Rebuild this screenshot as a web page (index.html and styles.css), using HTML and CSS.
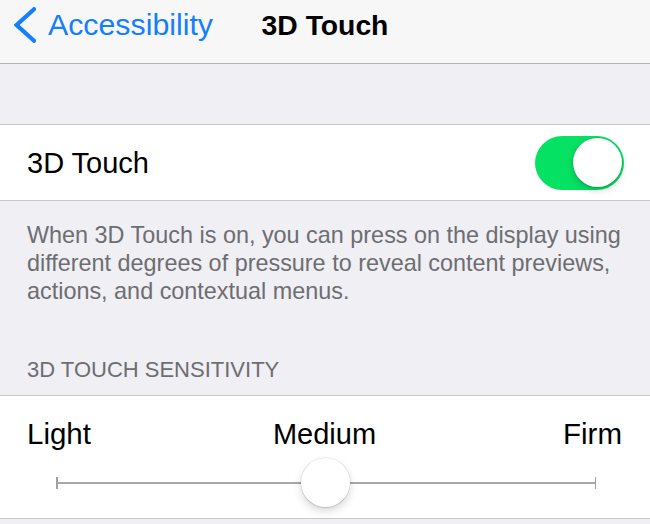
FILE: index.html
```html
<!DOCTYPE html>
<html lang="en">
<head>
<meta charset="utf-8">
<title>3D Touch</title>
<link rel="stylesheet" href="styles.css">
</head>
<body>
<header class="nav">
  <a class="back" href="#">
    <svg class="chevron" width="22" height="36" viewBox="0 0 22 36" aria-hidden="true">
      <polyline points="20,2.2 2.6,18 20,33.8" fill="none" stroke="#157efb" stroke-width="4.2" stroke-linecap="round" stroke-linejoin="miter"/>
    </svg>
    <span class="back-label">Accessibility</span>
  </a>
  <h1 class="title">3D Touch</h1>
  <div class="nav-spacer"></div>
</header>

<div class="gap"></div>

<section class="group">
  <div class="cell">
    <span class="cell-label">3D Touch</span>
    <span class="switch"><span class="knob"></span></span>
  </div>
</section>

<p class="footer">When 3D Touch is on, you can press on the display using different degrees of pressure to reveal content previews, actions, and contextual menus.</p>

<h2 class="section-header">3D TOUCH SENSITIVITY</h2>

<section class="group slider-group">
  <div class="slider-labels">
    <span class="lbl-left">Light</span>
    <span class="lbl-mid">Medium</span>
    <span class="lbl-right">Firm</span>
  </div>
  <div class="slider">
    <span class="tick"></span>
    <span class="track"></span>
    <span class="tick"></span>
    <span class="thumb"></span>
  </div>
</section>
</body>
</html>
```
FILE: styles.css
```css
* { box-sizing: border-box; }

html, body {
  margin: 0;
  padding: 0;
}

body {
  width: 650px;
  height: 524px;
  overflow: hidden;
  background: #efeff4;
  font-family: "Liberation Sans", Arial, sans-serif;
  color: #000;
}

.nav {
  height: 64px;
  background: #f7f7f8;
  border-bottom: 1px solid #b2b2b2;
  display: grid;
  grid-template-columns: 1fr auto 1fr;
  align-items: start;
}

.back {
  display: flex;
  align-items: flex-start;
  padding: 7px 0 0 14px;
  color: #157efb;
  text-decoration: none;
}

.chevron {
  display: block;
  flex: none;
}

.back-label {
  margin: 1px 0 0 12px;
  font-size: 30.3px;
  line-height: 34px;
}

.title {
  margin: 0;
  padding-top: 8px;
  font-size: 28.3px;
  line-height: 34px;
  font-weight: 700;
}

.gap {
  height: 60px;
}

.group {
  background: #fff;
  border-top: 1px solid #c8c7cc;
  border-bottom: 1px solid #c8c7cc;
}

.cell {
  height: 75px;
  display: flex;
  align-items: center;
  justify-content: space-between;
  padding: 0 26px 0 27px;
}

.cell-label {
  font-size: 29px;
  line-height: 34px;
}

.switch {
  width: 89px;
  height: 54px;
  border-radius: 27px;
  background: #05e163;
  display: flex;
  align-items: center;
  justify-content: flex-end;
  padding-right: 2.5px;
}

.knob {
  width: 49px;
  height: 49px;
  border-radius: 50%;
  background: #fff;
  box-shadow: 0 3px 7px rgba(0, 0, 0, 0.18), 0 0 0 0.5px rgba(0, 0, 0, 0.1), 0 1px 1px rgba(0, 0, 0, 0.12);
}

.footer {
  margin: 0;
  padding: 20px 20px 0 27px;
  font-size: 23.4px;
  line-height: 28px;
  color: #6d6d72;
}

.section-header {
  margin: 0;
  padding: 52px 27px 12px;
  font-size: 22px;
  line-height: 26px;
  font-weight: 400;
  color: #6d6d72;
}

.slider-group {
  height: 124px;
  padding-top: 21px;
}

.slider-labels {
  display: grid;
  grid-template-columns: 1fr auto 1fr;
  padding: 0 28px 0 27px;
  font-size: 29.5px;
  line-height: 34px;
}

.lbl-left { justify-self: start; }
.lbl-mid { justify-self: center; font-size: 29px; }
.lbl-right { justify-self: end; }

.slider {
  position: relative;
  height: 49px;
  margin: 7px 54px 0 56px;
  display: flex;
  align-items: center;
}

.track {
  flex: 1;
  height: 2px;
  background: #a8a8a8;
}

.tick {
  width: 1.5px;
  height: 12px;
  background: #a0a0a0;
}

.thumb {
  position: absolute;
  top: 0;
  left: 244.5px;
  width: 49px;
  height: 49px;
  border-radius: 50%;
  background: #fff;
  box-shadow: 0 4px 8px rgba(0, 0, 0, 0.16), 0 0 0 0.5px rgba(0, 0, 0, 0.12), 0 1px 1px rgba(0, 0, 0, 0.1);
}
```
